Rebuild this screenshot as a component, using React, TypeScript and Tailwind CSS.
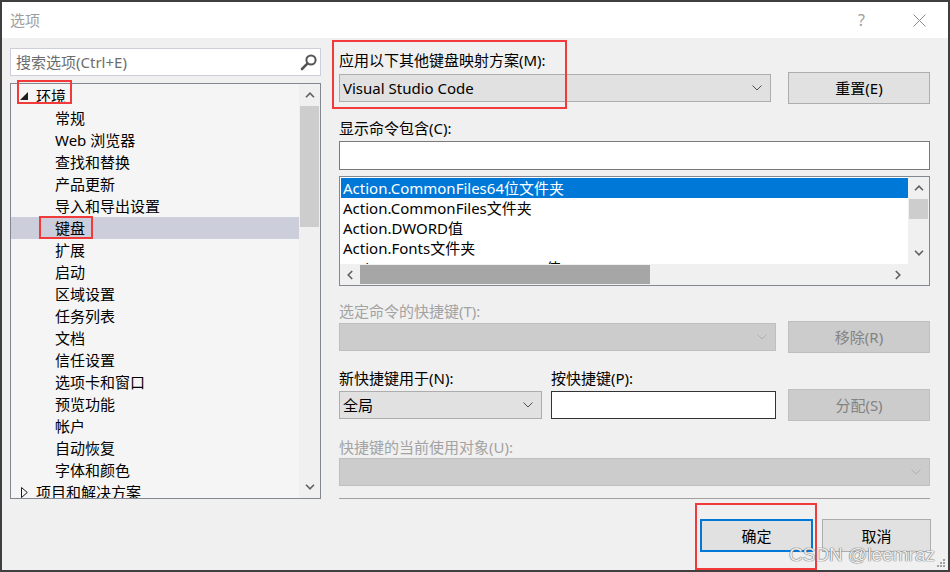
import React from "react";

const FONT = "font-['Noto_Sans','Noto_Sans_CJK_SC',sans-serif]";

function DownChevron({ color = "#505050" }: { color?: string }) {
  return (
    <svg width="10" height="6" viewBox="0 0 10 6">
      <path d="M0.5 0.5 L5 5 L9.5 0.5" fill="none" stroke={color} strokeWidth="1" />
    </svg>
  );
}

function ScrollUp() {
  return (
    <svg width="10" height="6" viewBox="0 0 10 6">
      <path d="M1 5.2 L5 1.2 L9 5.2" fill="none" stroke="#606060" strokeWidth="1.6" />
    </svg>
  );
}
function ScrollDown() {
  return (
    <svg width="10" height="6" viewBox="0 0 10 6">
      <path d="M1 0.8 L5 4.8 L9 0.8" fill="none" stroke="#606060" strokeWidth="1.6" />
    </svg>
  );
}
function ScrollLeft() {
  return (
    <svg width="6" height="10" viewBox="0 0 6 10">
      <path d="M5.2 1 L1.2 5 L5.2 9" fill="none" stroke="#606060" strokeWidth="1.6" />
    </svg>
  );
}
function ScrollRight() {
  return (
    <svg width="6" height="10" viewBox="0 0 6 10">
      <path d="M0.8 1 L4.8 5 L0.8 9" fill="none" stroke="#606060" strokeWidth="1.6" />
    </svg>
  );
}

function Select({
  text,
  width,
  disabled,
}: {
  text?: string;
  width: string;
  disabled?: boolean;
}) {
  return (
    <div
      className={`${width} h-[28px] flex items-center pl-[3px] pr-[8px] border ${
        disabled ? "bg-[#cccccc] border-[#bfbfbf]" : "bg-[#e1e1e1] border-[#adadad]"
      }`}
    >
      <span className="leading-[20px] text-black">{text}</span>
      <span className="ml-auto flex items-center">
        <DownChevron color={disabled ? "#b0b0b0" : "#505050"} />
      </span>
    </div>
  );
}

function Button({
  text,
  disabled,
  className = "",
}: {
  text: string;
  disabled?: boolean;
  className?: string;
}) {
  return (
    <div
      className={`w-[142px] h-[32px] flex items-center justify-center border leading-[20px] ${
        disabled
          ? "bg-[#cccccc] border-[#bfbfbf] text-[#838383]"
          : "bg-[#e1e1e1] border-[#adadad] text-black"
      } ${className}`}
    >
      {text}
    </div>
  );
}

const treeItems = [
  "常规",
  "Web 浏览器",
  "查找和替换",
  "产品更新",
  "导入和导出设置",
  "键盘",
  "扩展",
  "启动",
  "区域设置",
  "任务列表",
  "文档",
  "信任设置",
  "选项卡和窗口",
  "预览功能",
  "帐户",
  "自动恢复",
  "字体和颜色",
];

const commands = [
  "Action.CommonFiles64位文件夹",
  "Action.CommonFiles文件夹",
  "Action.DWORD值",
  "Action.Fonts文件夹",
  "Action.HKEY_CURRENT_USER值",
];

export default function App() {
  return (
    <div
      className={`relative w-[950px] h-[572px] border-2 border-[#3f3f3f] bg-[#f0f0f0] flex flex-col overflow-hidden text-[15px] text-black ${FONT}`}
    >
      {/* Title bar */}
      <div className="h-[36px] shrink-0 bg-white flex items-center pl-[8px] pr-[22px]">
        <span className="text-[#9d9d9d] leading-[20px]">选项</span>
        <span className="ml-auto mr-[48px] text-[#9d9d9d] text-[16px] leading-[20px]">?</span>
        <svg width="13" height="13" viewBox="0 0 13 13">
          <path d="M0.5 0.5 L12.5 12.5 M12.5 0.5 L0.5 12.5" stroke="#8a8a8a" strokeWidth="1" />
        </svg>
      </div>

      {/* Body */}
      <div className="flex flex-1 pl-[8px]">
        {/* Left column */}
        <div className="w-[311px] pt-[10px] flex flex-col">
          <div className="h-[28px] bg-white border border-[#cccedb] flex items-center pl-[5px] pr-[2px]">
            <span className="text-[#6d6d6d] leading-[20px]">搜索选项(Ctrl+E)</span>
            <svg className="ml-auto" width="18" height="18" viewBox="0 0 18 18">
              <circle cx="11" cy="7" r="4.6" fill="none" stroke="#555" strokeWidth="2" />
              <path d="M7.6 10.4 L2 16" stroke="#555" strokeWidth="2.6" strokeLinecap="round" />
            </svg>
          </div>

          <div className="relative mt-[7px] h-[416px] border border-[#828790] bg-[#f5f5f5] flex">
            <div className="flex-1 overflow-hidden pt-[1px]">
              <div className="h-[22px] flex items-center pl-[9px]">
                <svg width="8" height="8" viewBox="0 0 8 8">
                  <polygon points="8,0 8,8 0,8" fill="#1e1e1e" />
                </svg>
                <span className="ml-[8px] leading-[22px]">环境</span>
              </div>
              {treeItems.map((t) => (
                <div
                  key={t}
                  className={`h-[22px] leading-[22px] pl-[44px] whitespace-nowrap ${
                    t === "键盘" ? "bg-[#cccedb]" : ""
                  }`}
                >
                  {t}
                </div>
              ))}
              <div className="h-[22px] flex items-center pl-[10px]">
                <svg width="7" height="11" viewBox="0 0 7 11">
                  <polygon points="0.5,0.5 6.3,5.5 0.5,10.5" fill="none" stroke="#1e1e1e" strokeWidth="1" />
                </svg>
                <span className="ml-[8px] leading-[22px] whitespace-nowrap">项目和解决方案</span>
              </div>
            </div>
            {/* scrollbar */}
            <div className="w-[21px] bg-[#f0f0f0] flex flex-col">
              <div className="h-[22px] flex items-center justify-center">
                <ScrollUp />
              </div>
              <div className="h-[121px] mx-[1px] bg-[#cdcdcd]" />
              <div className="flex-1" />
              <div className="h-[22px] flex items-center justify-center">
                <ScrollDown />
              </div>
            </div>
            {/* annotation boxes */}
            <div className="absolute left-[6px] top-[-4px] w-[55px] h-[24px] border-2 border-[#f23a3a]" />
            <div className="absolute left-[28px] top-[132px] w-[54px] h-[23px] border-2 border-[#f23a3a]" />
          </div>
        </div>

        {/* Right column */}
        <div className="relative ml-[18px] w-[591px] flex flex-col">
          <div className="absolute left-[-7px] top-[2px] w-[235px] h-[69px] border-2 border-[#f23a3a]" />

          <div className="mt-[12px] leading-[20px]">应用以下其他键盘映射方案(M):</div>
          <div className="mt-[2px] h-[32px] flex items-center">
            <Select text="Visual Studio Code" width="w-[432px]" />
            <Button text="重置(E)" className="ml-auto" />
          </div>

          <div className="mt-[14px] leading-[20px]">显示命令包含(C):</div>
          <div className="mt-[3px] h-[29px] bg-white border border-[#7a7a7a]" />

          <div className="mt-[6px] h-[110px] bg-white border border-[#828790] flex flex-col">
            <div className="h-[87px] flex">
              <div className="flex-1 overflow-hidden pt-[1px] pl-[1px]">
                {commands.map((c, i) => (
                  <div
                    key={c}
                    className={`h-[20px] leading-[20px] pl-[2px] whitespace-nowrap ${
                      i === 0 ? "bg-[#0078d7] text-white" : ""
                    }`}
                  >
                    {c}
                  </div>
                ))}
              </div>
              <div className="w-[21px] bg-[#f0f0f0] flex flex-col">
                <div className="h-[22px] flex items-center justify-center">
                  <ScrollUp />
                </div>
                <div className="h-[20px] mx-[1px] bg-[#cdcdcd]" />
                <div className="flex-1" />
                <div className="h-[22px] flex items-center justify-center">
                  <ScrollDown />
                </div>
              </div>
            </div>
            <div className="h-[21px] bg-[#f0f0f0] flex">
              <div className="w-[20px] flex items-center justify-center">
                <ScrollLeft />
              </div>
              <div className="w-[290px] my-[1px] bg-[#a6a6a6]" />
              <div className="flex-1" />
              <div className="w-[20px] flex items-center justify-center">
                <ScrollRight />
              </div>
              <div className="w-[21px]" />
            </div>
          </div>

          <div className="mt-[15px] leading-[20px] text-[#a3a3a3]">选定命令的快捷键(T):</div>
          <div className="h-[32px] flex items-center">
            <Select width="w-[437px]" disabled />
            <Button text="移除(R)" disabled className="ml-auto" />
          </div>

          <div className="mt-[15px] flex leading-[20px]">
            <div className="w-[212px]">新快捷键用于(N):</div>
            <div>按快捷键(P):</div>
          </div>
          <div className="mt-[1px] h-[32px] flex items-center">
            <Select text="全局" width="w-[203px]" />
            <div className="ml-[9px] w-[225px] h-[28px] bg-white border border-[#333]" />
            <Button text="分配(S)" disabled className="ml-auto" />
          </div>

          <div className="mt-[16px] leading-[20px] text-[#a3a3a3]">快捷键的当前使用对象(U):</div>
          <div className="mt-[1px]">
            <Select width="w-full" disabled />
          </div>

          <div className="mt-[12px] h-px bg-[#a0a0a0]" />

          <div className="mt-[20px] flex justify-end gap-[9px]">
            <div className="relative">
              <div className="w-[113px] h-[33px] flex items-center justify-center bg-[#e1e1e1] border-2 border-[#0078d7] leading-[20px]">
                确定
              </div>
              <div className="absolute left-[-5px] top-[-16px] w-[122px] h-[67px] border-2 border-[#f23a3a]" />
            </div>
            <div className="w-[109px] h-[33px] flex items-center justify-center bg-[#e1e1e1] border border-[#adadad] leading-[20px] mr-[-1px]">
              取消
            </div>
          </div>
        </div>
      </div>

      {/* watermark */}
      <div className="absolute left-[787px] top-[542px] text-[19px] leading-[22px] text-white/90 font-['Liberation_Sans',sans-serif] [text-shadow:0_0_1px_#555,0_0_1px_#555] whitespace-nowrap">
        CSDN @leemraz
      </div>

      {/* resize grip */}
      <svg className="absolute right-[2px] bottom-[2px]" width="9" height="9" viewBox="0 0 9 9">
        <rect x="6" y="0" width="2" height="2" fill="#a0a0a0" />
        <rect x="3" y="3" width="2" height="2" fill="#a0a0a0" />
        <rect x="6" y="3" width="2" height="2" fill="#a0a0a0" />
        <rect x="0" y="6" width="2" height="2" fill="#a0a0a0" />
        <rect x="3" y="6" width="2" height="2" fill="#a0a0a0" />
        <rect x="6" y="6" width="2" height="2" fill="#a0a0a0" />
      </svg>
    </div>
  );
}
